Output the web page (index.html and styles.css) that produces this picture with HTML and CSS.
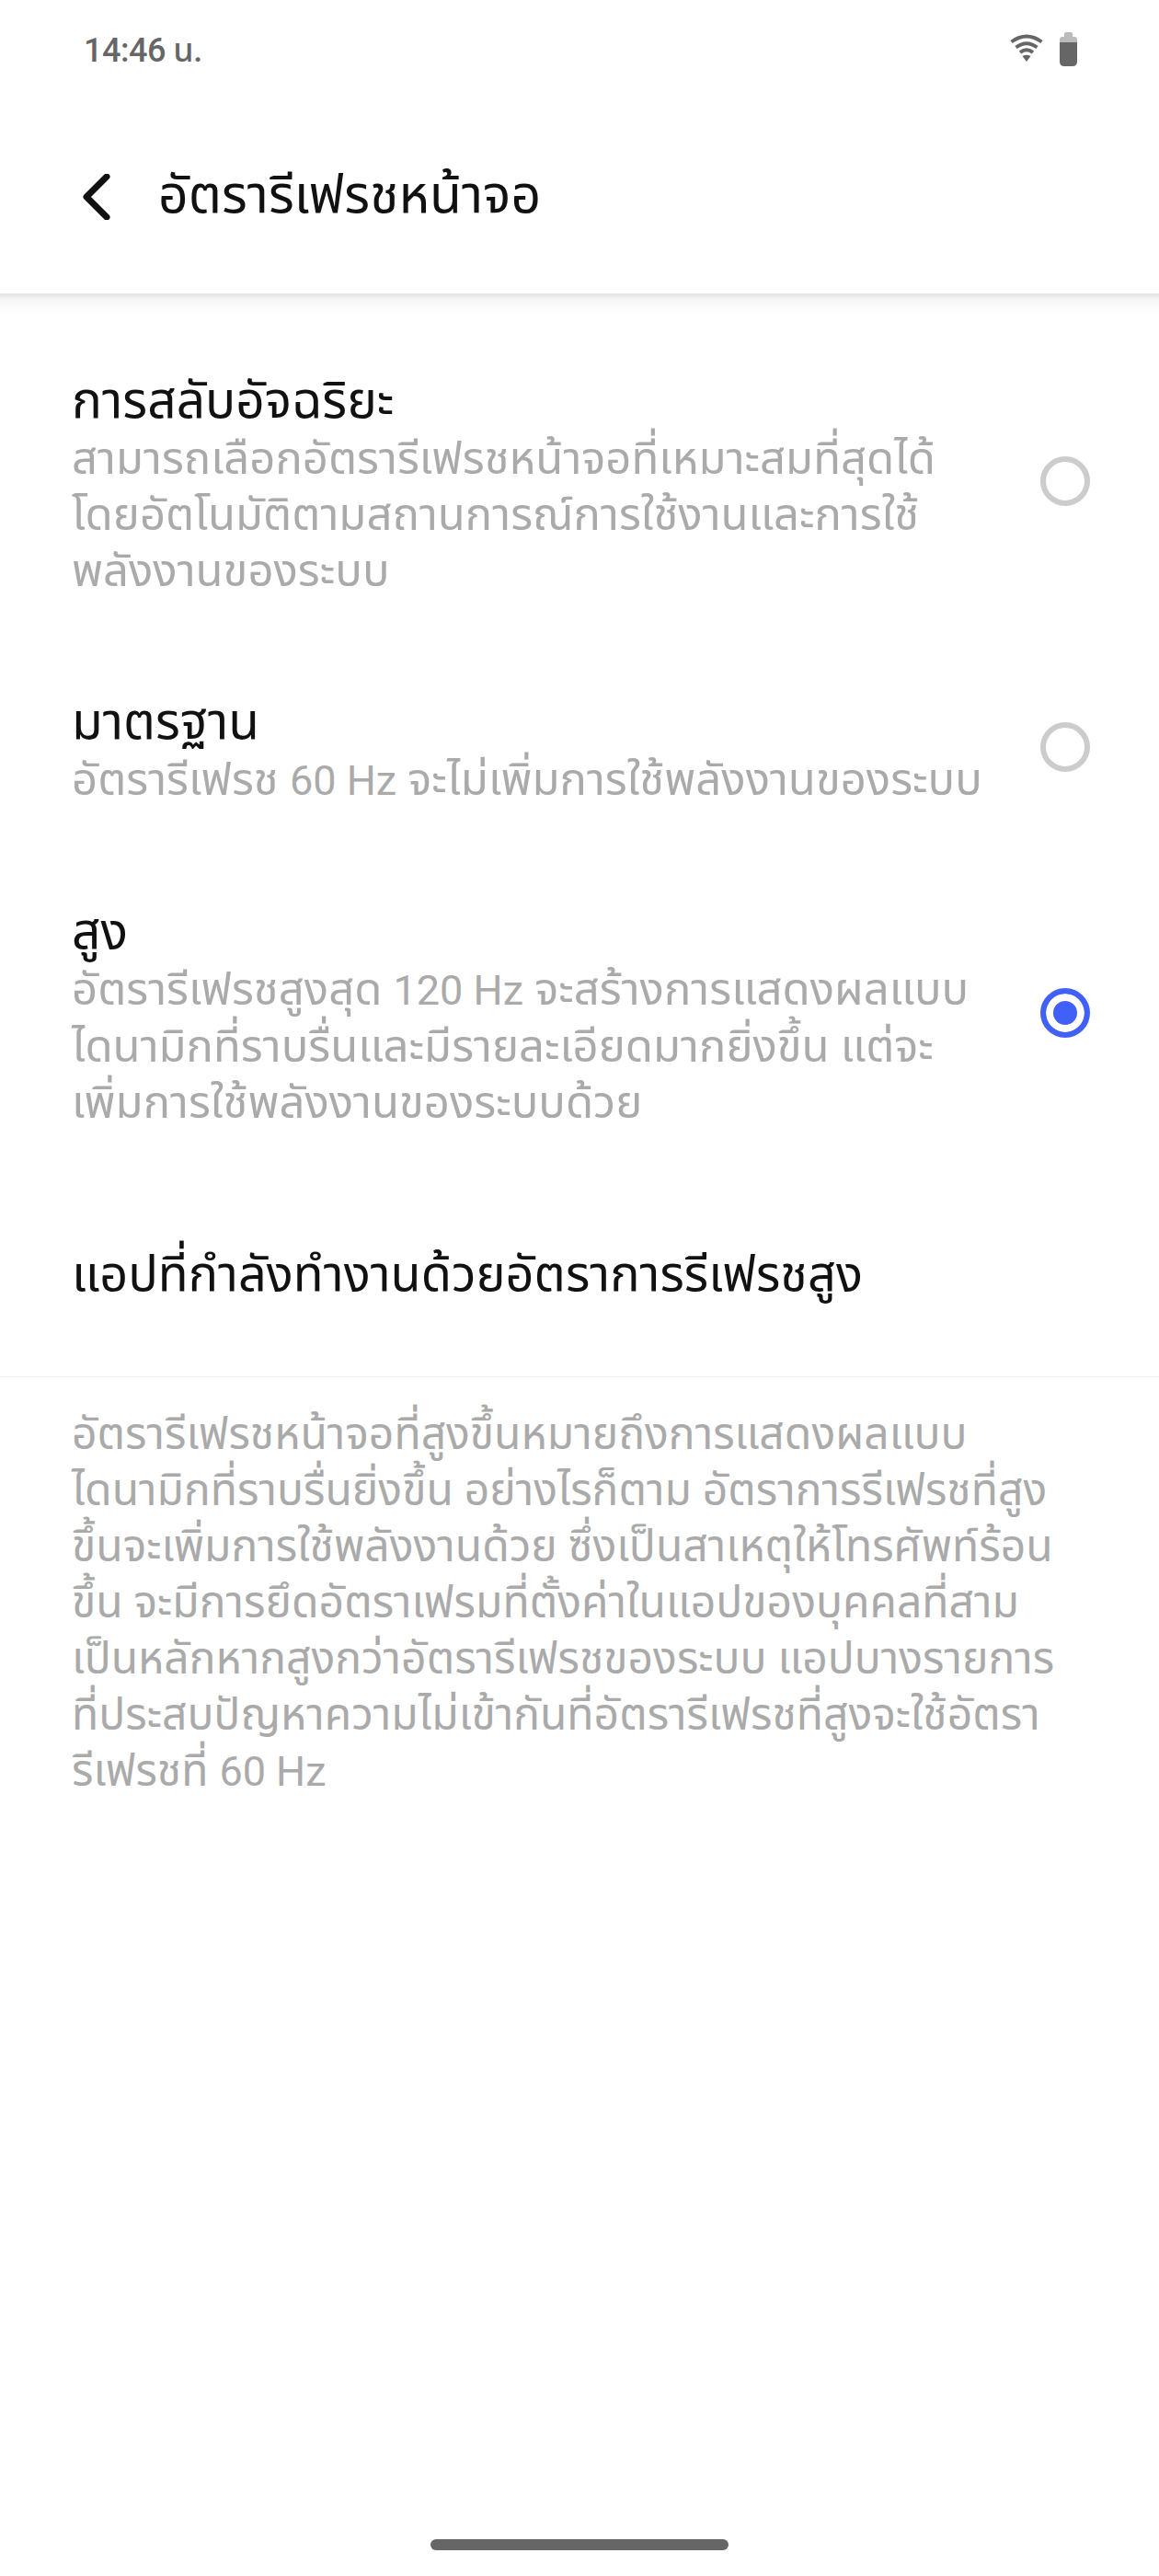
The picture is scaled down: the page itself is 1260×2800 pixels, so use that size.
FILE: index.html
```html
<!DOCTYPE html>
<html>
<head>
    <meta charset="utf-8"/>
    <title>อัตรารีเฟรชหน้าจอ</title>
    <link rel="stylesheet" href="styles.css">
</head>
<body>
    <div id="app">
        <div class="status">
            <span>14:46 น.</span>
            <div class="status-icons">
                <svg class="wifi" width="36" height="32" viewBox="0 0 36 32" fill="none" stroke="#666" stroke-width="4">
                    <path d="M1.500 9.500 Q18 -2.500 34.500 9.500"/>
                    <path d="M6.500 15.500 Q18 7 29.500 15.500"/>
                    <path d="M11 21 Q18 15.500 25 21"/>
                    <path d="M13.500 25 Q18 22.500 22.500 25 L18 31Z" fill="#666" stroke="none"/>
                </svg>
                <svg class="battery" width="19" height="37" viewBox="0 0 19 37">
                    <path d="M5 6 L5 2 Q5 0 7 0 L12 0 Q14 0 14 2 L14 6Z" fill="#bbb"/>
                    <path d="M0 11 L0 8 Q0 5 3 5 L16 5 Q19 5 19 8 L19 11Z" fill="#bbb"/>
                    <path d="M0 11 L19 11 L19 32 Q19 37 14 37 L5 37 Q0 37 0 32Z" fill="#666"/>
                </svg>
            </div>
        </div>
        <div class="toolbar">
            <svg class="back" width="32" height="50" viewBox="0 0 32 50"><path d="M28 3 L6 25 L28 47" fill="none" stroke="#111" stroke-width="7" stroke-linecap="round" stroke-linejoin="round"/></svg>
            <h1>อัตรารีเฟรชหน้าจอ</h1>
        </div>
        <div class="options">
            <div class="option">
                <div class="option-text">
                    <div class="title">การสลับอัจฉริยะ</div>
                    <div class="desc">สามารถเลือกอัตรารีเฟรชหน้าจอที่เหมาะสมที่สุดได้<br>โดยอัตโนมัติตามสถานการณ์การใช้งานและการใช้<br>พลังงานของระบบ</div>
                </div>
                <span class="radio"></span>
            </div>
            <div class="option">
                <div class="option-text">
                    <div class="title">มาตรฐาน</div>
                    <div class="desc">อัตรารีเฟรช <span class="latin">60 Hz</span> จะไม่เพิ่มการใช้พลังงานของระบบ</div>
                </div>
                <span class="radio"></span>
            </div>
            <div class="option">
                <div class="option-text">
                    <div class="title">สูง</div>
                    <div class="desc">อัตรารีเฟรชสูงสุด <span class="latin">120 Hz</span> จะสร้างการแสดงผลแบบ<br>ไดนามิกที่ราบรื่นและมีรายละเอียดมากยิ่งขึ้น แต่จะ<br>เพิ่มการใช้พลังงานของระบบด้วย</div>
                </div>
                <span class="radio on"></span>
            </div>
        </div>
        <div class="apps-row">แอปที่กำลังทำงานด้วยอัตราการรีเฟรชสูง</div>
        <div class="note">อัตรารีเฟรชหน้าจอที่สูงขึ้นหมายถึงการแสดงผลแบบ<br>ไดนามิกที่ราบรื่นยิ่งขึ้น อย่างไรก็ตาม อัตราการรีเฟรชที่สูง<br>ขึ้นจะเพิ่มการใช้พลังงานด้วย ซึ่งเป็นสาเหตุให้โทรศัพท์ร้อน<br>ขึ้น จะมีการยึดอัตราเฟรมที่ตั้งค่าในแอปของบุคคลที่สาม<br>เป็นหลักหากสูงกว่าอัตรารีเฟรชของระบบ แอปบางรายการ<br>ที่ประสบปัญหาความไม่เข้ากันที่อัตรารีเฟรชที่สูงจะใช้อัตรา<br>รีเฟรชที่ <span class="latin">60 Hz</span></div>
        <div class="home-bar"></div>
    </div>
</body>
</html>
```
FILE: styles.css
```css
* {
    box-sizing: border-box;
}
body {
    margin: 0;
    background-color: #fff;
    font-family: Roboto, "Noto Sans", "Noto Sans Thai", sans-serif;
}
#app {
    width: 1260px;
    height: 2800px;
    display: flex;
    flex-direction: column;
}
.status {
    height: 108px;
    padding: 37px 89px 0 91px;
    display: flex;
    justify-content: space-between;
    align-items: flex-start;
    font-size: 36px;
    line-height: 36px;
    font-weight: 500;
    letter-spacing: -0.5px;
    color: #666;
}
.status-icons {
    display: flex;
    align-items: flex-start;
    gap: 18px;
    margin-top: -2px;
}
.wifi {
    margin-top: 1px;
}
.toolbar {
    position: relative;
    height: 211px;
    padding-left: 88px;
    display: flex;
    align-items: center;
    gap: 52px;
}
.toolbar::after {
    content: "";
    position: absolute;
    left: 0;
    right: 0;
    top: 100%;
    height: 22px;
    background: linear-gradient(#e2e2e2, #f6f6f6 30%, #fff);
}
.toolbar h1 {
    margin: 0;
    font-size: 57px;
    font-weight: 400;
    color: #111;
}
.options {
    display: flex;
    flex-direction: column;
    gap: 101px;
    padding: 84px 75px 0 78px;
}
.option {
    display: flex;
    align-items: center;
    justify-content: space-between;
}
.title {
    font-size: 55px;
    line-height: 65px;
    color: #111;
}
.desc {
    font-size: 49px;
    line-height: 61px;
    white-space: nowrap;
    color: #aaa;
}
.latin {
    font-size: 45px;
}
.radio {
    width: 54px;
    height: 54px;
    margin-bottom: 8px;
    border: 6px solid #ccc;
    border-radius: 50%;
    flex-shrink: 0;
}
.radio.on {
    border-color: #4060f8;
    background-color: #4060f8;
    box-shadow: inset 0 0 0 8px #fff;
}
.apps-row {
    margin-top: 121px;
    padding: 0 78px 76px;
    font-size: 54px;
    line-height: 70px;
    color: #111;
    border-bottom: 1px solid #eee;
}
.note {
    padding: 31px 78px 0;
    font-size: 48px;
    line-height: 61px;
    white-space: nowrap;
    color: #aaa;
}
.home-bar {
    width: 324px;
    height: 12px;
    border-radius: 6px;
    background-color: #666;
    margin: auto auto 28px;
}
```
